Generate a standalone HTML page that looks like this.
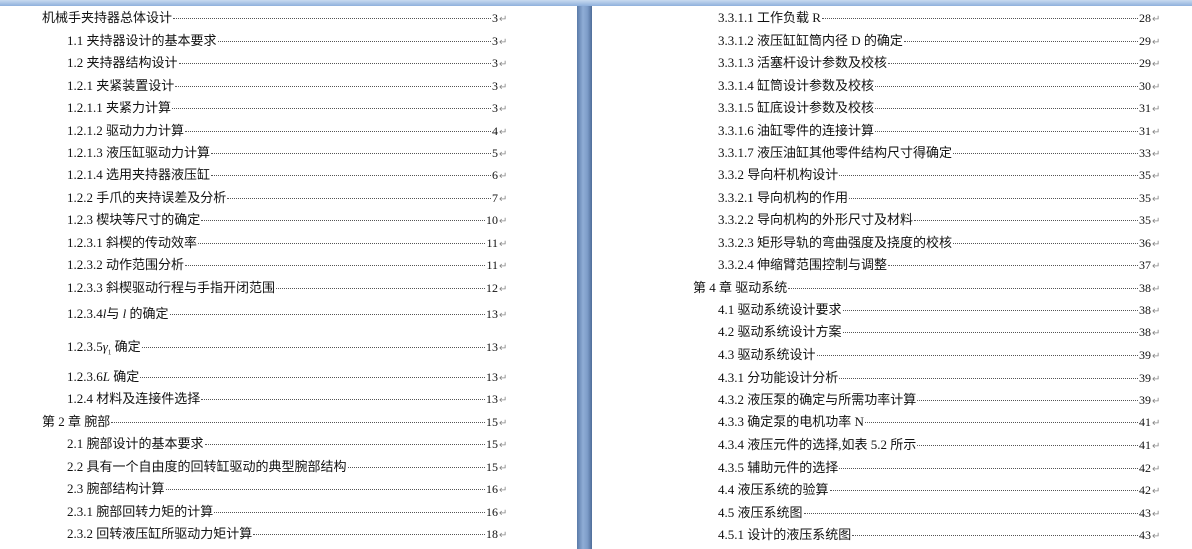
<!DOCTYPE html>
<html><head><meta charset="utf-8"><style>
body{margin:0;width:1192px;height:549px;background:#fff;position:relative;overflow:hidden;font-family:"Liberation Serif","Noto Sans CJK SC",serif;font-size:13px;color:#111}
.top{position:absolute;left:0;top:0;width:1192px;height:6px;background:linear-gradient(#c9daf0,#8fb0dc)}
.bar{position:absolute;left:577px;top:6px;width:15px;height:543px;background:linear-gradient(90deg,#5a7aa8,#8fadd6 40%,#7d9cc8 70%,#4e6c98)}
.r{position:absolute;display:flex;align-items:baseline;height:16px;line-height:16px;white-space:nowrap}
.r .t{flex:none}
.r .d{flex:1;border-bottom:1px dotted #555;margin:0 1px;transform:translateY(-3px)}
.r .n{flex:none;font-size:12px}
.r .a{flex:none;color:#888;font-size:10px;width:10px;margin-left:1px}
i{font-family:"Liberation Serif",serif}
</style></head><body>
<div class="top"></div><div class="bar"></div>
<div id="c"></div>
<script>
const L=[[42,18,"机械手夹持器总体设计","3"],[67,41,"1.1 夹持器设计的基本要求","3"],[67,63,"1.2 夹持器结构设计","3"],[67,86,"1.2.1 夹紧装置设计","3"],[67,108,"1.2.1.1 夹紧力计算","3"],[67,131,"1.2.1.2 驱动力力计算","4"],[67,153,"1.2.1.3 液压缸驱动力计算","5"],[67,175,"1.2.1.4 选用夹持器液压缸","6"],[67,198,"1.2.2 手爪的夹持误差及分析","7"],[67,220,"1.2.3 楔块等尺寸的确定","10"],[67,243,"1.2.3.1 斜楔的传动效率","11"],[67,265,"1.2.3.2 动作范围分析","11"],[67,288,"1.2.3.3 斜楔驱动行程与手指开闭范围","12"],[67,314,"1.2.3.4<i>l</i>与 <i>l</i> 的确定","13"],[67,347,"1.2.3.5<i>γ</i><sub style='font-size:7px'>1</sub> 确定","13"],[67,377,"1.2.3.6<i>L</i> 确定","13"],[67,399,"1.2.4 材料及连接件选择","13"],[42,422,"第 2 章  腕部","15"],[67,444,"2.1 腕部设计的基本要求","15"],[67,467,"2.2 具有一个自由度的回转缸驱动的典型腕部结构","15"],[67,489,"2.3 腕部结构计算","16"],[67,512,"2.3.1 腕部回转力矩的计算","16"],[67,534,"2.3.2 回转液压缸所驱动力矩计算","18"]];
const R=[[718,18,"3.3.1.1 工作负载 R","28"],[718,41,"3.3.1.2 液压缸缸筒内径 D 的确定","29"],[718,63,"3.3.1.3 活塞杆设计参数及校核","29"],[718,86,"3.3.1.4 缸筒设计参数及校核","30"],[718,108,"3.3.1.5 缸底设计参数及校核","31"],[718,131,"3.3.1.6 油缸零件的连接计算","31"],[718,153,"3.3.1.7 液压油缸其他零件结构尺寸得确定","33"],[718,175,"3.3.2 导向杆机构设计","35"],[718,198,"3.3.2.1 导向机构的作用","35"],[718,220,"3.3.2.2 导向机构的外形尺寸及材料","35"],[718,243,"3.3.2.3 矩形导轨的弯曲强度及挠度的校核","36"],[718,265,"3.3.2.4 伸缩臂范围控制与调整","37"],[693,288,"第 4 章  驱动系统","38"],[718,310,"4.1 驱动系统设计要求","38"],[718,332,"4.2 驱动系统设计方案","38"],[718,355,"4.3 驱动系统设计","39"],[718,378,"4.3.1 分功能设计分析","39"],[718,400,"4.3.2 液压泵的确定与所需功率计算","39"],[718,422,"4.3.3 确定泵的电机功率 N","41"],[718,445,"4.3.4 液压元件的选择,如表 5.2 所示","41"],[718,468,"4.3.5 辅助元件的选择","42"],[718,490,"4.4 液压系统的验算","42"],[718,513,"4.5 液压系统图","43"],[718,535,"4.5.1 设计的液压系统图","43"]];
let h="";
for(const [x,y,t,n] of L)h+=`<div class="r" style="left:${x}px;top:${y-8}px;width:${509-x}px"><span class="t">${t}</span><span class="d"></span><span class="n">${n}</span><span class="a">↵</span></div>`;
for(const [x,y,t,n] of R)h+=`<div class="r" style="left:${x}px;top:${y-8}px;width:${1162-x}px"><span class="t">${t}</span><span class="d"></span><span class="n">${n}</span><span class="a">↵</span></div>`;
document.getElementById("c").innerHTML=h;
</script>
</body></html>
